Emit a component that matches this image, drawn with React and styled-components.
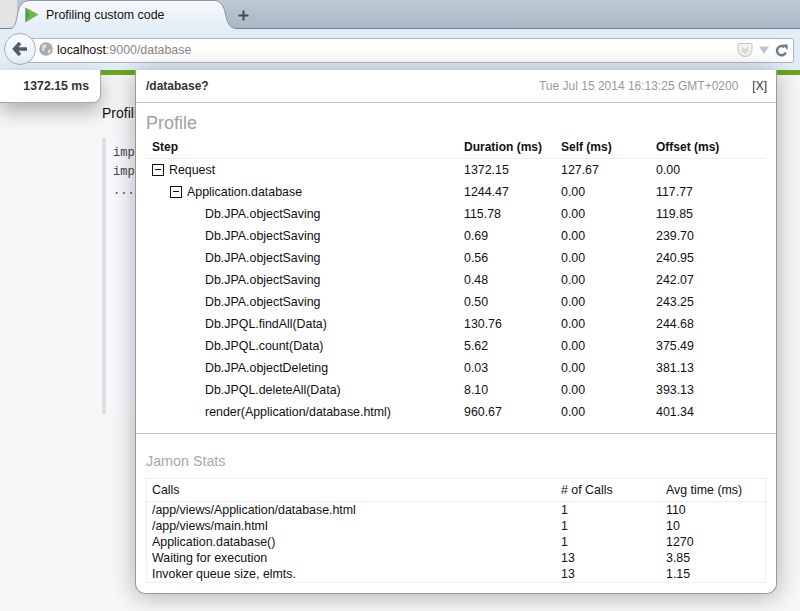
import React from "react";
import styled, { createGlobalStyle } from "styled-components";

const Global = createGlobalStyle`
  html, body { margin: 0; padding: 0; height: 611px; overflow: hidden; background: #f7f7f7; }
  body { font-family: "Liberation Sans", Arial, sans-serif; font-size: 12.4px; color: #111; }
  * { box-sizing: border-box; }
`;

const Page = styled.div`
  position: relative;
  width: 800px;
  height: 611px;
  overflow: hidden;
  display: flex;
  flex-direction: column;
`;

const TabStrip = styled.div`
  height: 29px;
  flex: none;
  background: linear-gradient(#bdcad6, #a9b8c5);
  border-bottom: 1px solid #74838f;
  display: flex;
  align-items: flex-start;
  position: relative;
`;

const Corner = styled.div`
  width: 17px;
  height: 28px;
  background: #e4e4e4;
  border-radius: 0 0 8px 0;
  flex: none;
  margin-right: -17px;
`;

const Tab = styled.div`
  position: relative;
  margin-left: 10px;
  width: 226px;
  height: 29px;
  display: flex;
  align-items: center;
  padding: 0 0 0 15px;
  gap: 7px;
  font-size: 12.4px;
  color: #111;
`;

const TabShape = styled.svg`
  position: absolute;
  left: 0;
  top: 0;
`;

const TabIcon = styled.svg`
  position: relative;
  flex: none;
`;

const TabTitle = styled.span`
  position: relative;
`;

const NewTab = styled.div`
  width: 14px;
  height: 30px;
  display: flex;
  align-items: center;
  justify-content: center;
`;

const NavBar = styled.div`
  height: 41px;
  flex: none;
  background: #e3edf8;
  display: flex;
  align-items: center;
  padding: 0 6px 0 15px;
  position: relative;
`;

const UrlBar = styled.div`
  flex: 1;
  height: 25px;
  margin-top: 1px;
  background: #fff;
  border: 1px solid #a8b8c8;
  border-radius: 2px;
  display: flex;
  align-items: center;
  padding: 0 5px 0 41px;
  font-size: 12.4px;
  color: #888;
`;

const Host = styled.span`
  color: #111;
`;

const Grow = styled.div`
  flex: 1;
`;

const UrlIcons = styled.div`
  display: flex;
  align-items: center;
  gap: 6px;
`;

const BackButton = styled.div`
  position: absolute;
  left: 4px;
  top: 4px;
  width: 32px;
  height: 32px;
  border-radius: 50%;
  background: linear-gradient(#fbfdff, #e6eef6);
  border: 1px solid #a3b0bd;
  display: flex;
  align-items: center;
  justify-content: center;
`;

const Globe = styled.svg`
  position: absolute;
  left: 39px;
  top: 13px;
`;

const Content = styled.div`
  flex: 1;
  position: relative;
  background: #f7f7f7;
  border-top: 5px solid #6aa821;
`;

const Body = styled.div`
  padding: 30px 0 0 102px;
  font-size: 14px;
  color: #111;
`;

const Intro = styled.div`
  line-height: 17px;
`;

const Code = styled.pre`
  margin: 16px 0 0 0;
  width: 500px;
  height: 276px;
  background: #f7f8fe;
  border-left: 4px solid #e0e0e0;
  padding: 6px 0 0 7px;
  font: 12px/19px "Liberation Mono", monospace;
  color: #444;
`;

const Timer = styled.div`
  position: absolute;
  left: 0;
  top: 70px;
  width: 101px;
  height: 33px;
  background: #fff;
  border-radius: 0 0 8px 0;
  box-shadow: 0 8px 20px rgba(0, 0, 0, 0.3);
  border-right: 1px solid #aaa;
  border-bottom: 1px solid #aaa;
  font-weight: bold;
  font-size: 12.3px;
  color: #333;
  text-align: right;
  padding: 9px 11px 0 0;
`;

const Popup = styled.div`
  position: absolute;
  left: 135px;
  top: 70px;
  width: 642px;
  height: 524px;
  background: #fff;
  border: 1px solid #999;
  border-top: none;
  border-radius: 0 0 10px 10px;
  box-shadow: 0 2px 24px rgba(0, 0, 0, 0.3);
  display: flex;
  flex-direction: column;
`;

const PopHead = styled.div`
  height: 33px;
  flex: none;
  border-bottom: 1px solid #c4c4c4;
  display: flex;
  align-items: center;
  padding: 0 9px 0 10px;
  font-size: 12px;
`;

const Path = styled.span`
  font-weight: bold;
  color: #333;
`;

const Stamp = styled.span`
  margin-left: auto;
  color: #999;
`;

const Close = styled.span`
  margin-left: 14px;
  color: #333;
`;

const Section = styled.div`
  padding: 10px 10px 0;
  height: 331px;
  border-bottom: 1px solid #c4c4c4;
  flex: none;
`;

const Heading = styled.div`
  font-size: 18px;
  line-height: 21px;
  color: #a0a0a0;
`;

const StepRow = styled.div`
  display: grid;
  grid-template-columns: 312px 97px 95px 1fr;
  height: 22px;
  align-items: center;
  padding-left: 6px;
  width: 620px;
`;

const StepHead = styled(StepRow)`
  font-weight: bold;
  font-size: 12px;
  height: 24px;
  margin-top: 1px;
  border-bottom: 1px solid #eee;
`;

const StepName = styled.div`
  display: flex;
  align-items: center;
  gap: 5px;
  padding-left: ${(p) => p.$indent}px;
`;

const Toggle = styled.span`
  width: 12px;
  height: 12px;
  border: 1px solid #111;
  position: relative;
  flex: none;
  background: #fff;
  &::after {
    content: "";
    position: absolute;
    left: 2px;
    right: 2px;
    top: 4px;
    height: 1px;
    background: #111;
  }
`;

const StatsSection = styled.div`
  padding: 19px 10px 0;
`;

const StatsHeading = styled.div`
  font-size: 14.3px;
  line-height: 17px;
  color: #a8a8a8;
`;

const StatsTable = styled.div`
  margin-top: 8px;
  border: 1px solid #eee;
  width: 620px;
  height: 105px;
`;

const StatsRow = styled.div`
  display: grid;
  grid-template-columns: 409px 105px 1fr;
  height: 16px;
  line-height: 16px;
  padding-left: 5px;
`;

const StatsHead = styled(StatsRow)`
  height: 23px;
  line-height: 23px;
  border-bottom: 1px solid #eee;
`;

const steps = [
  [0, true, "Request", "1372.15", "127.67", "0.00"],
  [18, true, "Application.database", "1244.47", "0.00", "117.77"],
  [53, false, "Db.JPA.objectSaving", "115.78", "0.00", "119.85"],
  [53, false, "Db.JPA.objectSaving", "0.69", "0.00", "239.70"],
  [53, false, "Db.JPA.objectSaving", "0.56", "0.00", "240.95"],
  [53, false, "Db.JPA.objectSaving", "0.48", "0.00", "242.07"],
  [53, false, "Db.JPA.objectSaving", "0.50", "0.00", "243.25"],
  [53, false, "Db.JPQL.findAll(Data)", "130.76", "0.00", "244.68"],
  [53, false, "Db.JPQL.count(Data)", "5.62", "0.00", "375.49"],
  [53, false, "Db.JPA.objectDeleting", "0.03", "0.00", "381.13"],
  [53, false, "Db.JPQL.deleteAll(Data)", "8.10", "0.00", "393.13"],
  [53, false, "render(Application/database.html)", "960.67", "0.00", "401.34"],
];

const stats = [
  ["/app/views/Application/database.html", "1", "110"],
  ["/app/views/main.html", "1", "10"],
  ["Application.database()", "1", "1270"],
  ["Waiting for execution", "13", "3.85"],
  ["Invoker queue size, elmts.", "13", "1.15"],
];

export default function App() {
  return (
    <Page>
      <Global />
      <TabStrip>
        <Corner />
        <Tab>
          <TabShape width="226" height="29" viewBox="0 0 226 29">
            <defs>
              <linearGradient id="tabFill" x1="0" y1="0" x2="0" y2="1">
                <stop offset="0" stopColor="#f8fafd" />
                <stop offset="1" stopColor="#e3edf8" />
              </linearGradient>
            </defs>
            <path
              d="M0 29 C4 28.5 5.5 25 7 17 C8.5 7 11 1 20 1 H204 C211 1 213.5 6 215.5 14 C217.5 24 220 28 226 28.5 V29 Z"
              fill="url(#tabFill)"
            />
            <path
              d="M0 28.5 C4 28 5.5 25 7 17 C8.5 7 11 0.5 20 0.5 H204 C211 0.5 213.5 6 215.5 14 C217.5 24 220 28 226 28.5"
              fill="none"
              stroke="#8b99a6"
            />
          </TabShape>
          <TabIcon width="14" height="16" viewBox="0 0 14 16">
            <path d="M0.5 0.5 L13.5 7.5 L0.5 15.5 Z" fill="#72b64a" />
            <path d="M0.5 0.5 L4.5 8 L0.5 15.5 Z" fill="#4f9a63" />
          </TabIcon>
          <TabTitle>Profiling custom code</TabTitle>
        </Tab>
        <NewTab>
          <svg width="11" height="11" viewBox="0 0 11 11">
            <path d="M5.5 0.5 V10.5 M0.5 5.5 H10.5" stroke="#3f4b57" strokeWidth="2" />
          </svg>
        </NewTab>
      </TabStrip>
      <NavBar>
        <UrlBar>
          <Host>localhost</Host>:9000/database
          <Grow />
          <UrlIcons>
            <svg width="16" height="14" viewBox="0 0 16 14">
              <path d="M1 1.5 Q1 0.5 2 0.5 H14 Q15 0.5 15 1.5 V6.5 A7 7 0 0 1 1 6.5 Z" fill="#f3f3f3" stroke="#c4c4c4" />
              <path d="M4.5 4.5 L8 7 L11.5 4.5 M4.5 7 L8 9.5 L11.5 7" fill="none" stroke="#bdbdbd" />
            </svg>
            <svg width="10" height="8" viewBox="0 0 10 8">
              <path d="M0 0.5 H10 L5 8 Z" fill="#bcc6d0" />
            </svg>
            <svg width="13" height="13" viewBox="0 0 13 13">
              <path d="M10.8 8.6 A4.6 4.6 0 1 1 9.4 3" fill="none" stroke="#6d7b88" strokeWidth="2.4" />
              <path d="M7.2 0.6 H12.6 V6 Z" fill="#6d7b88" />
            </svg>
          </UrlIcons>
        </UrlBar>
        <BackButton>
          <svg width="16" height="16" viewBox="0 0 16 16">
            <path d="M8 2 L2.5 8 L8 14 M3 8 H15" fill="none" stroke="#4f5b67" strokeWidth="3.4" />
          </svg>
        </BackButton>
        <Globe width="14" height="14" viewBox="0 0 14 14">
          <circle cx="7" cy="7" r="6.8" fill="#a9a9a9" />
          <path d="M3 3 L7 2 L8 5 L5 7 L6 10 L3 8 Z M9 8 L12 7 L11 11 L9 12 Z" fill="#dcdcdc" />
        </Globe>
      </NavBar>
      <Content>
        <Body>
          <Intro>Profiling</Intro>
          <Code>{"import\nimport\n..."}</Code>
        </Body>
      </Content>
      <Timer>1372.15 ms</Timer>
      <Popup>
        <PopHead>
          <Path>/database?</Path>
          <Stamp>Tue Jul 15 2014 16:13:25 GMT+0200</Stamp>
          <Close>[X]</Close>
        </PopHead>
        <Section>
          <Heading>Profile</Heading>
          <StepHead>
            <div>Step</div>
            <div>Duration (ms)</div>
            <div>Self (ms)</div>
            <div>Offset (ms)</div>
          </StepHead>
          {steps.map(([indent, toggle, name, d, s, o], i) => (
            <StepRow key={i}>
              <StepName $indent={indent}>
                {toggle && <Toggle />}
                {name}
              </StepName>
              <div>{d}</div>
              <div>{s}</div>
              <div>{o}</div>
            </StepRow>
          ))}
        </Section>
        <StatsSection>
          <StatsHeading>Jamon Stats</StatsHeading>
          <StatsTable>
            <StatsHead>
              <div>Calls</div>
              <div># of Calls</div>
              <div>Avg time (ms)</div>
            </StatsHead>
            {stats.map(([a, b, c]) => (
              <StatsRow key={a}>
                <div>{a}</div>
                <div>{b}</div>
                <div>{c}</div>
              </StatsRow>
            ))}
          </StatsTable>
        </StatsSection>
      </Popup>
    </Page>
  );
}
